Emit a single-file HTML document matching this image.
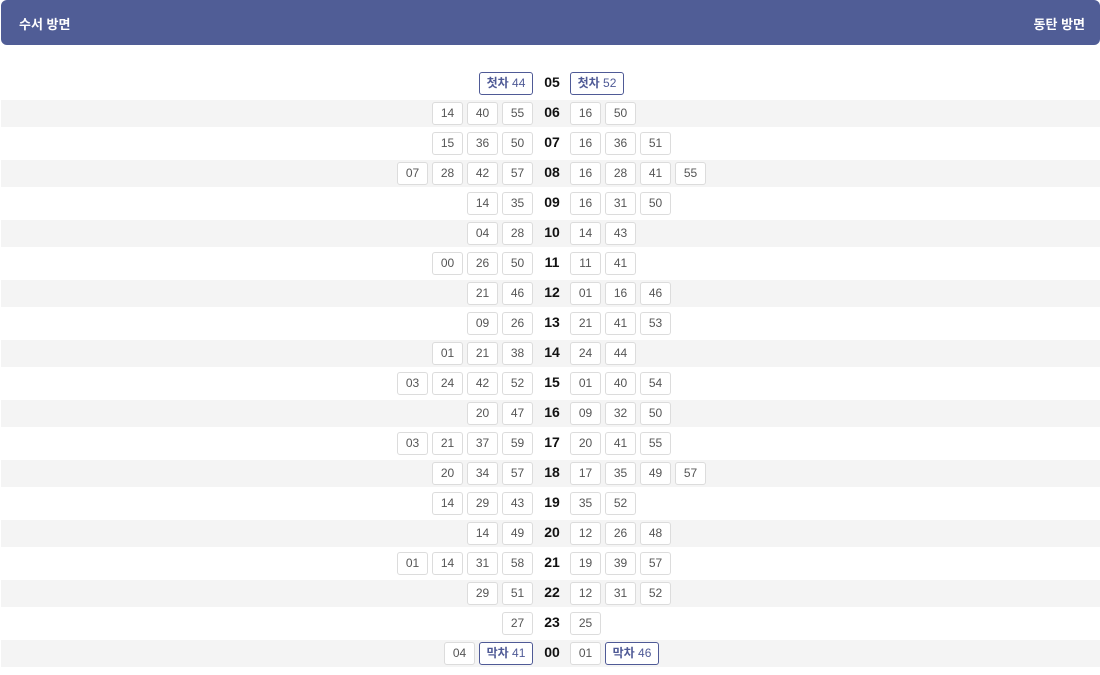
<!DOCTYPE html>
<html><head><meta charset="utf-8"><style>
body{margin:0;width:1100px;height:675px;background:#fff;font-family:"Liberation Sans","Noto Sans CJK KR",sans-serif;position:relative;overflow:hidden}
.hd{position:absolute;left:1px;top:0;width:1099px;height:45px;background:#505d96;border-radius:6px;color:#fff;font-weight:bold;font-size:13px}
.hd .l{position:absolute;left:18px;top:14px}.hd .r{position:absolute;right:15px;top:14px}
.row{position:absolute;left:1px;width:1099px;height:27px}
.g{background:#f4f4f4}
.L{position:absolute;right:567px;top:2px;display:flex;gap:4px;flex-direction:row}
.R{position:absolute;left:569px;top:2px;display:flex;gap:4px}
.b{box-sizing:border-box;width:31px;height:23px;border:1px solid #dcdcdc;border-radius:3px;background:#fff;color:#555;font-size:12px;line-height:21px;text-align:center}
.f{width:54px;border-color:#4f5a96;color:#4f5a96}.f b{font-weight:bold}
.h{position:absolute;left:535px;width:32px;top:4px;text-align:center;font-weight:bold;font-size:14px;color:#111}
</style></head><body>
<div class="hd"><span class="l">수서 방면</span><span class="r">동탄 방면</span></div>
<div id="c"></div>
<script>
var d=[["05",["F첫차 44"],["F첫차 52"]],["06",["14","40","55"],["16","50"]],["07",["15","36","50"],["16","36","51"]],["08",["07","28","42","57"],["16","28","41","55"]],["09",["14","35"],["16","31","50"]],["10",["04","28"],["14","43"]],["11",["00","26","50"],["11","41"]],["12",["21","46"],["01","16","46"]],["13",["09","26"],["21","41","53"]],["14",["01","21","38"],["24","44"]],["15",["03","24","42","52"],["01","40","54"]],["16",["20","47"],["09","32","50"]],["17",["03","21","37","59"],["20","41","55"]],["18",["20","34","57"],["17","35","49","57"]],["19",["14","29","43"],["35","52"]],["20",["14","49"],["12","26","48"]],["21",["01","14","31","58"],["19","39","57"]],["22",["29","51"],["12","31","52"]],["23",["27"],["25"]],["00",["04","F막차 41"],["01","F막차 46"]]];
function bx(s){if(s[0]=="F"){var t=s.slice(1).split(" ");return '<div class="b f"><b>'+t[0]+'</b> '+t[1]+'</div>';}return '<div class="b">'+s+'</div>';}
var h="";d.forEach(function(r,i){h+='<div class="row'+(i%2?' g':'')+'" style="top:'+(70+30*i)+'px"><div class="L">'+r[1].map(bx).join("")+'</div><div class="h">'+r[0]+'</div><div class="R">'+r[2].map(bx).join("")+'</div></div>';});
document.getElementById("c").innerHTML=h;
</script>
</body></html>
